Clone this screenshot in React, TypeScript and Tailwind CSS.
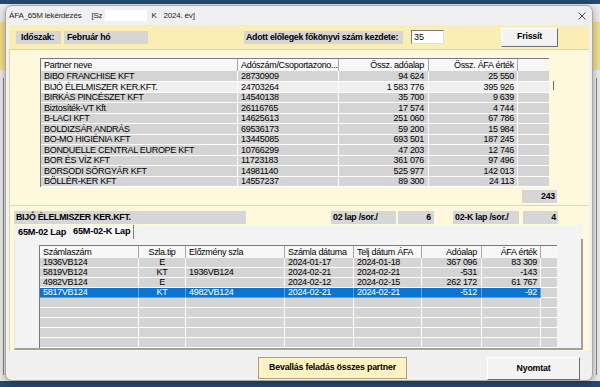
import React from 'react';

const font = "font-['Liberation_Sans',Arial,sans-serif]";

const partners = [
  ['BIBO FRANCHISE KFT', '28730909', '94 624', '25 550'],
  ['BIJÓ ÉLELMISZER KER.KFT.', '24703264', '1 583 776', '395 926'],
  ['BIRKÁS PINCÉSZET KFT', '14540138', '35 700', '9 639'],
  ['Biztosíték-VT Kft', '26116765', '17 574', '4 744'],
  ['B-LACI KFT', '14625613', '251 060', '67 786'],
  ['BOLDIZSÁR ANDRÁS', '69536173', '59 200', '15 984'],
  ['BO-MO HIGIÉNIA KFT', '13445085', '693 501', '187 245'],
  ['BONDUELLE CENTRAL EUROPE KFT', '10766299', '47 203', '12 746'],
  ['BOR ÉS VÍZ KFT', '11723183', '361 076', '97 496'],
  ['BORSODI SÖRGYÁR KFT', '14981140', '525 977', '142 013'],
  ['BÖLLÉR-KER KFT', '14557237', '89 300', '24 113'],
];

const invoices = [
  ['1936VB124', 'E', '', '2024-01-17', '2024-01-18', '367 096', '83 309'],
  ['5819VB124', 'KT', '1936VB124', '2024-02-21', '2024-02-21', '-531', '-143'],
  ['4982VB124', 'E', '', '2024-02-12', '2024-02-15', '262 172', '61 767'],
  ['5817VB124', 'KT', '4982VB124', '2024-02-21', '2024-02-21', '-512', '-92'],
];

const cols1 = 'grid grid-cols-[197px_101px_90px_89px_32px]';
const cols2 = 'grid grid-cols-[99px_47px_99px_69px_68px_60px_59px_17px]';

const GrayBox: React.FC<{ className?: string; children?: React.ReactNode }> = ({ className = '', children }) => (
  <div className={`h-[13px] whitespace-nowrap bg-[#d6d6d6] text-[8.8px] font-bold leading-[13px] tracking-[-0.25px] ${className}`}>
    {children}
  </div>
);

const PartnerGrid: React.FC = () => (
  <div className="ml-[30px] flex">
    <div className="w-[509px] border-l border-t border-[#7a7a7a] bg-[#d4d4d4]">
      <div className={`${cols1} h-[12px] whitespace-nowrap bg-[#f7f7f7] leading-[12px]`}>
        <div className="border-r border-[#a8a8a8] pl-[3px]">Partner neve</div>
        <div className="border-r border-[#a8a8a8] pl-[3px]">Adószám/Csoportazono...</div>
        <div className="border-r border-[#a8a8a8] pr-[4px] text-right">Össz. adóalap</div>
        <div className="border-r border-[#a8a8a8] pr-[3px] text-right">Össz. ÁFA érték</div>
        <div />
      </div>
      {partners.map((p, i) => (
        <div key={p[1]} className={`${cols1} h-[10.5px] whitespace-nowrap leading-[10px] ${i === 1 ? 'bg-[#efefef]' : ''}`}>
          <div className="border-b border-r border-white pl-[3px]">{p[0]}</div>
          <div className="border-b border-r border-white pl-[3px]">{p[1]}</div>
          <div className="border-b border-r border-white pr-[4px] text-right">{p[2]}</div>
          <div className="border-b border-r border-white pr-[3px] text-right">{p[3]}</div>
          <div className="border-b border-white" />
        </div>
      ))}
    </div>
    <div className="w-[14px]">
      <div className="ml-[4px] mt-[23px] h-[9px] w-[1px] bg-[#6a6a6a]" />
    </div>
  </div>
);

const InvoiceGrid: React.FC = () => (
  <div className="w-[518px] whitespace-nowrap border-l border-t border-[#7a7a7a] bg-[#d4d4d4]">
    <div className={`${cols2} h-[12px] bg-[#f7f7f7] leading-[12px]`}>
      <div className="border-r border-[#a8a8a8] pl-[3px]">Számlaszám</div>
      <div className="border-r border-[#a8a8a8] text-center">Szla.tip</div>
      <div className="border-r border-[#a8a8a8] pl-[3px]">Előzmény szla</div>
      <div className="border-r border-[#a8a8a8] pl-[3px]">Számla dátuma</div>
      <div className="border-r border-[#a8a8a8] pl-[3px]">Telj dátum ÁFA</div>
      <div className="border-r border-[#a8a8a8] pr-[4px] text-right">Adóalap</div>
      <div className="border-r border-[#a8a8a8] pr-[3px] text-right">ÁFA érték</div>
      <div />
    </div>
    {invoices.map((r, i) => {
      const sel = i === 3;
      const cell = sel ? 'border-b border-r border-[#5ea0e0] bg-[#0a74d2] text-white' : 'border-b border-r border-white';
      return (
        <div key={r[0]} className={`${cols2} h-[10px] leading-[9px]`}>
          <div className={`${cell} pl-[3px]`}>{r[0]}</div>
          <div className={`${cell} text-center`}>{r[1]}</div>
          <div className={`${cell} pl-[3px]`}>{r[2]}</div>
          <div className={`${cell} pl-[3px]`}>{r[3]}</div>
          <div className={`${cell} pl-[3px]`}>{r[4]}</div>
          <div className={`${cell} pr-[4px] text-right`}>{r[5]}</div>
          <div className={`${cell} pr-[3px] text-right`}>{r[6]}</div>
          <div className="border-b border-white" />
        </div>
      );
    })}
    {[0, 1, 2, 3, 4].map((k) => (
      <div key={k} className={`${cols2} h-[10px]`}>
        <div className="border-b border-r border-white" />
        <div className="border-b border-r border-white" />
        <div className="border-b border-r border-white" />
        <div className="border-b border-r border-white" />
        <div className="border-b border-r border-white" />
        <div className="border-b border-r border-white" />
        <div className="border-b border-r border-white" />
        <div className="border-b border-white" />
      </div>
    ))}
  </div>
);

const App: React.FC = () => {
  return (
    <div className={`relative h-[387px] w-[600px] overflow-hidden bg-[#284a70] text-black ${font}`}>
      {/* parent window behind the dialog */}
      <div className="absolute bottom-[6px] left-0 right-0 top-[4px] flex flex-col bg-[#ececec]">
        <div className="mt-[18px] h-[48px] bg-[#f6df8a]" />
        <div className="flex flex-1 justify-between px-[3px] pt-[8px] pb-[6px]">
          <div className="w-[1px] bg-[#8a8a8a]" />
          <div className="w-[1px] bg-[#8a8a8a]" />
        </div>
      </div>

      {/* dialog */}
      <div className="absolute left-[5px] top-[5px] flex h-[376px] w-[588px] flex-col rounded-[7px] border border-[#a8a8a8] bg-[#f0f0f0] shadow-[0_2px_8px_rgba(0,0,0,0.35)]">
        <div className="flex h-[19px] items-center whitespace-nowrap text-[8px] tracking-[-0.2px] text-[#222]">
          <span className="ml-[3px]">ÁFA_65M lekérdezés</span>
          <span className="ml-[10px]">[Sz</span>
          <span className="ml-[3px] h-[11px] w-[42px] bg-white" />
          <span className="ml-[4px]">K</span>
          <span className="ml-[7px]">2024. év]</span>
          <svg className="ml-auto mr-[6px]" width="8" height="8" viewBox="0 0 8 8">
            <path d="M0.5 0.5 L7.5 7.5 M7.5 0.5 L0.5 7.5" stroke="#333" strokeWidth="0.9" />
          </svg>
        </div>

        <div className="mx-[3px] flex h-[24px] items-center bg-[#fbeeb5]">
          <GrayBox className="ml-[7px] w-[45px] pl-[5px]">Időszak:</GrayBox>
          <GrayBox className="ml-[3px] w-[84px] pl-[3px]">Február hó</GrayBox>
          <GrayBox className="ml-[96px] w-[159px] pl-[2px]">Adott előlegek főkönyvi szám kezdete:</GrayBox>
          <div className="ml-[8px] h-[14px] w-[33px] border border-b-[#e0e0e0] border-l-[#7a7a7a] border-r-[#e0e0e0] border-t-[#7a7a7a] bg-white pl-[2px] text-[9px] leading-[12px]">35</div>
          <button className="ml-[57px] h-[19px] w-[57px] border border-b-[#6e6e6e] border-l-white border-r-[#6e6e6e] border-t-white bg-[#f3f3f3] text-[8.8px] font-bold tracking-[-0.2px]">Frissít</button>
        </div>

        <div className="mx-[3px] flex h-[302px] flex-col border-l border-t border-[#ddd3a6] bg-[#fff8dc] text-[9px] tracking-[-0.3px]">
          <div className="mt-[8px]">
            <PartnerGrid />
          </div>
          <div className="mr-[32px] mt-[3px] flex justify-end">
            <GrayBox className="w-[35px] pr-[2px] text-right">243</GrayBox>
          </div>
          <div className="mt-[2px] border-b border-[#e4d9a8]" />
          <div className="mt-[5px] flex">
            <GrayBox className="ml-[4px] w-[232px] pl-[2px]">BIJÓ ÉLELMISZER KER.KFT.</GrayBox>
            <GrayBox className="ml-[85px] w-[65px] pl-[2px]">02 lap /sor./</GrayBox>
            <GrayBox className="ml-[2px] w-[36px] pr-[3px] text-right">6</GrayBox>
            <GrayBox className="ml-[19px] w-[66px] pl-[2px]">02-K lap /sor./</GrayBox>
            <GrayBox className="ml-[4px] w-[35px] pr-[2px] text-right">4</GrayBox>
          </div>
          <div className="ml-[4px] mt-[1px] w-[569px]">
            <div className="flex h-[14px] items-end whitespace-nowrap bg-[#f3f3f3] text-[9.2px] font-bold tracking-[-0.2px]">
              <div className="h-[13px] pl-[4px] pr-[5px] leading-[12px]">65M-02 Lap</div>
              <div className="h-[14px] border-r border-[#7a7a7a] bg-[#f6f6f6] pl-[2px] pr-[3px] leading-[13px]">65M-02-K Lap</div>
            </div>
            <div className="h-[111px] border-b-2 border-l border-r-2 border-b-[#a0a0a0] border-l-[#e8e8e8] border-r-[#a0a0a0] bg-[#f3f3f3] pl-[24px] pt-[6px]">
              <InvoiceGrid />
            </div>
          </div>
        </div>

        <div className="flex flex-1 items-start pt-[6px] tracking-[-0.2px]">
          <button className="ml-[252px] h-[22px] w-[149px] border border-[#a89f80] bg-[#fdf2c4] text-[8.8px] font-bold">Bevallás feladás összes partner</button>
          <button className="ml-[80px] h-[23px] w-[93px] border border-b-[#6e6e6e] border-l-white border-r-[#6e6e6e] border-t-white bg-[#f3f3f3] text-[8.8px] font-bold">Nyomtat</button>
        </div>
      </div>
    </div>
  );
};

export default App;
